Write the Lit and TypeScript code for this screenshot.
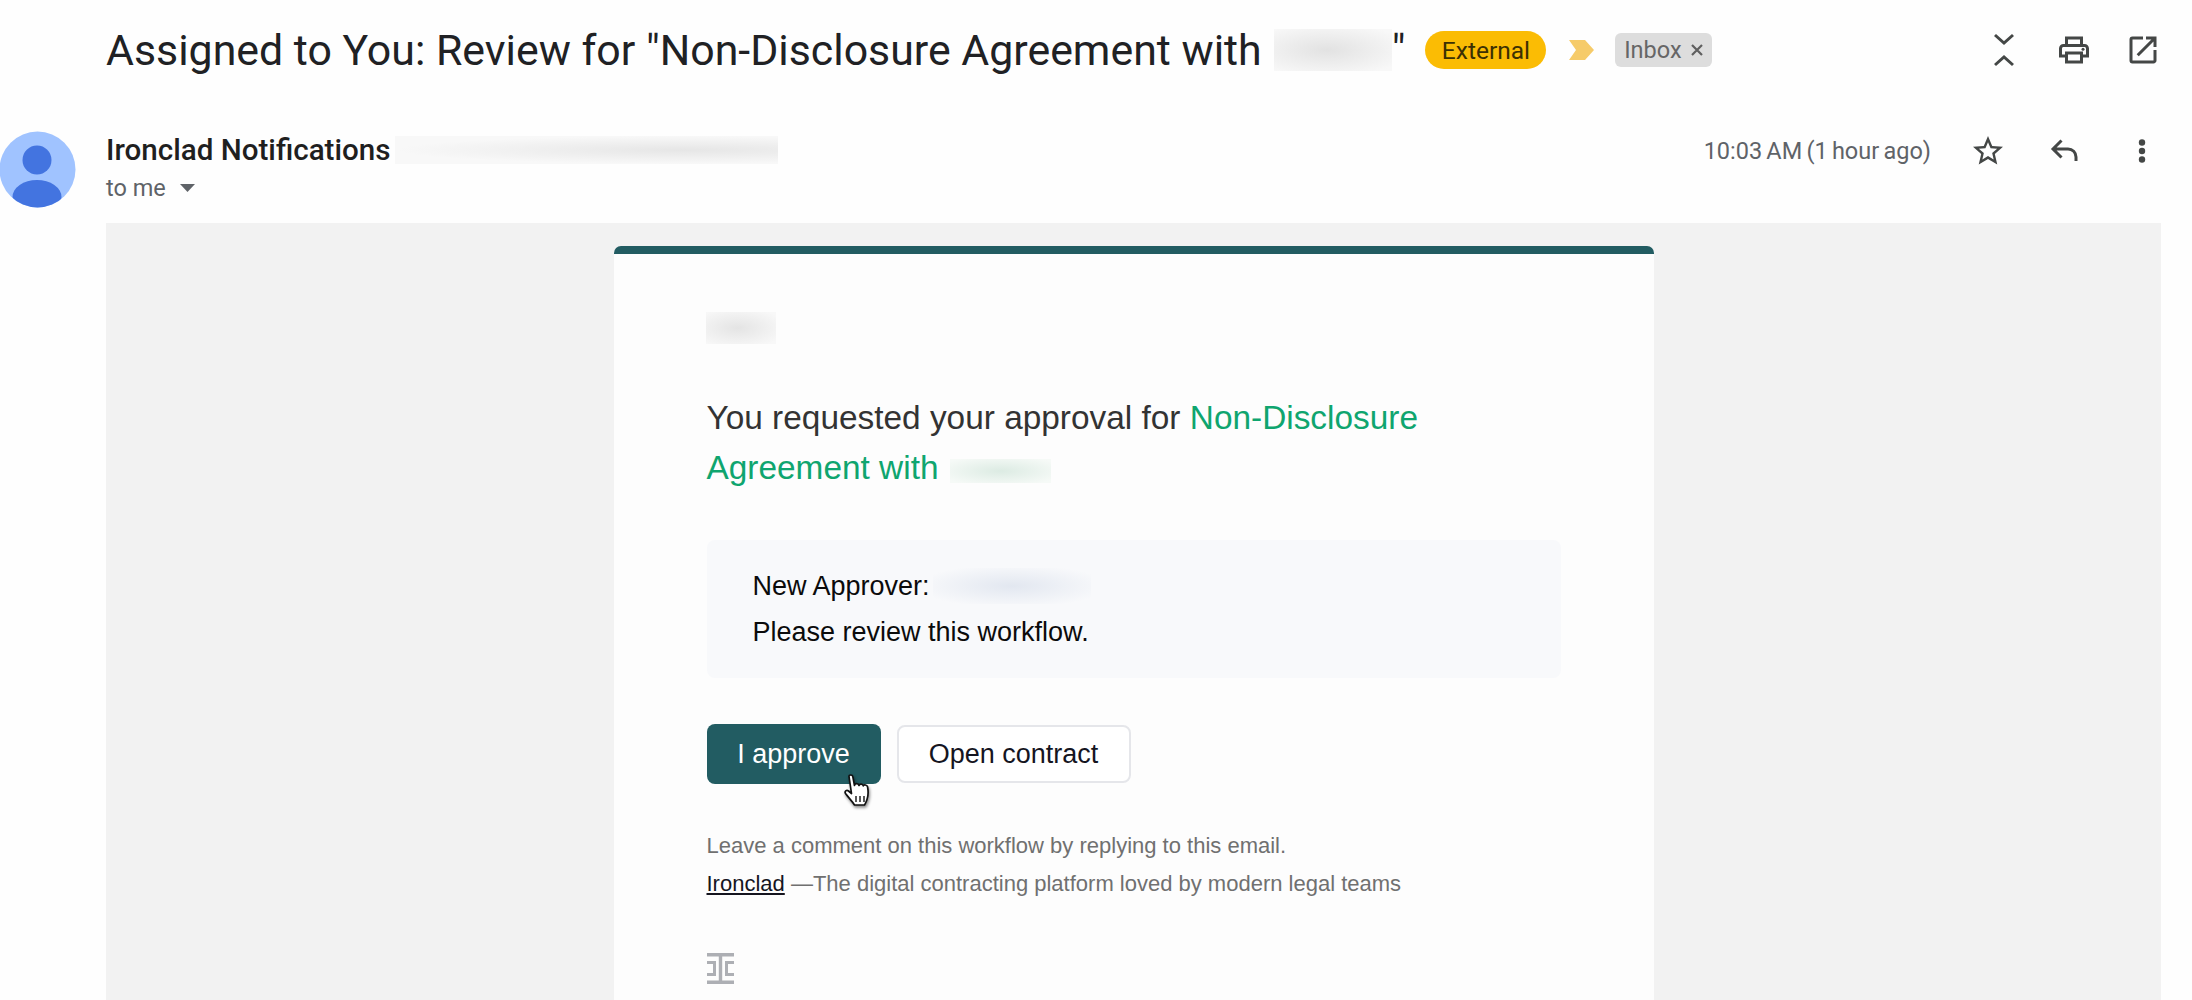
import { LitElement, html, css } from "lit";
import { customElement } from "lit/decorators.js";

@customElement("app-root")
export class AppRoot extends LitElement {
  static styles = css`
    :host { display: block; width: 2192px; height: 1000px; overflow: hidden; background: #fefefe; font-family: Roboto, "Noto Sans", sans-serif; color: #202124; }
    svg { display: block; flex: none; }
    .top { height: 100px; display: flex; align-items: center; padding: 0 31px 0 106px; }
    .title { font-size: 42.85px; line-height: 44px; font-weight: 400; color: #202124; white-space: nowrap; display: flex; align-items: center; }
    .b-title { display: inline-block; width: 118px; height: 42px; margin-left: 12px; background: radial-gradient(ellipse at 45% 50%, #e2e2e2, #f8f8f8 90%); }
    .pill { margin-left: 20px; width: 121px; height: 38px; border-radius: 19px; background: #fbbc04; color: #3c3003; font-size: 24.5px; display: flex; align-items: center; justify-content: center; }
    .marker { margin-left: 23px; }
    .chip { margin-left: 21px; width: 97px; height: 34px; border-radius: 6px; background: #dddddd; color: #666; font-size: 23.5px; display: flex; align-items: center; justify-content: center; gap: 8px; }
    .tools { margin-left: auto; display: flex; gap: 33.5px; }
    .sender { height: 123px; padding: 31px 32px 0 0; box-sizing: border-box; display: flex; align-items: flex-start; }
    .avatar { width: 76px; margin-right: 30px; }
    .who { display: flex; flex-direction: column; }
    .nameline { display: flex; align-items: center; height: 38px; }
    .name { font-size: 29.6px; font-weight: 500; color: #1f1f1f; }
    .b-mail { width: 383px; height: 28px; margin-left: 5px; background: radial-gradient(ellipse at 75% 50%, #e6e6e6, #f8f8f8 70%); }
    .tome { display: flex; align-items: center; gap: 14px; height: 38px; font-size: 23.5px; color: #5f6368; }
    .meta { margin-left: auto; display: flex; align-items: center; height: 40px; }
    .time { font-size: 23.5px; color: #5f6368; margin-right: 39px; word-spacing: -1.6px; }
    .acts { display: flex; gap: 41px; }
    .band { margin-left: 106px; width: 2055px; height: 777px; padding-top: 23px; box-sizing: border-box; background: #f2f2f2; display: flex; justify-content: center; }
    .card { width: 1040px; height: 760px; box-sizing: border-box; background: #fdfdfd; border-top: 8px solid #225c62; border-radius: 7px 7px 0 0; padding: 58px 93px 0 92px; font-family: "Liberation Sans", Arial, sans-serif; }
    .b-hi { width: 70px; height: 32px; background: radial-gradient(ellipse at 45% 50%, #e4e4e4, #f8f8f8 90%); }
    .h { margin: 49px 0 0 1px; font-size: 33.4px; line-height: 50px; font-weight: 400; color: #333333; }
    .h em { font-style: normal; color: #0fa56f; }
    .b-co { display: inline-block; width: 101px; height: 24px; margin-left: 11px; vertical-align: -4px; background: radial-gradient(ellipse at 50% 50%, #dcebe3, #f6faf7 90%); }
    .box { margin: 47px 0 0 1px; height: 138px; box-sizing: border-box; background: #f8f9fb; border-radius: 8px; padding: 23px 46px; font-size: 27px; line-height: 46px; color: #0b0b0b; }
    .row { display: flex; align-items: center; }
    .b-appr { width: 158px; height: 36px; margin-left: 3px; background: radial-gradient(ellipse at 50% 50%, #e2e7f0, #f8f9fb 85%); }
    .btns { position: relative; margin: 46px 0 0 1px; display: flex; align-items: center; gap: 16px; }
    .btn { box-sizing: border-box; display: flex; align-items: center; justify-content: center; font-size: 27px; border-radius: 8px; }
    .primary { width: 174px; height: 60px; background: #225c62; color: #fff; }
    .ghost { width: 234px; height: 58px; background: #fff; border: 2px solid #e5e6ea; color: #15151f; }
    .cursor { position: absolute; left: 137px; top: 50px; filter: drop-shadow(1px 2px 1.5px rgba(0,0,0,.45)); }
    .foot { margin: 43px 0 0 1px; font-size: 22px; line-height: 38px; color: #707070; }
    .foot a { color: #15151f; text-decoration: underline; }
    .logo { margin: 50px 0 0 1px; }
  `;

  render() {
    return html`
      <div class="top">
        <div class="title">Assigned to You: Review for "Non-Disclosure Agreement with<span class="b-title"></span>"</div>
        <div class="pill">External</div>
        <svg class="marker" width="25" height="20" viewBox="0 0 25 20"><path d="M0 0h16l9 10-9 10H0l7-10z" fill="#f6cb69"/></svg>
        <div class="chip">Inbox
          <svg width="14" height="14" viewBox="0 0 14 14"><path d="M2 2l10 10M12 2L2 12" stroke="#5f5f5f" stroke-width="2.2" fill="none"/></svg>
        </div>
        <div class="tools">
          <svg width="36" height="36" viewBox="0 0 36 36" fill="none" stroke="#444746" stroke-width="3"><path d="M9 3l9 8 9-8M9 33l9-8 9 8"/></svg>
          <svg width="36" height="36" viewBox="0 0 24 24" fill="#444746"><path d="M19 8h-1V3H6v5H5c-1.66 0-3 1.34-3 3v6h4v4h12v-4h4v-6c0-1.66-1.34-3-3-3zM8 5h8v3H8V5zm8 12v2H8v-4h8v2zm2-2v-2H6v2H4v-4c0-.55.45-1 1-1h14c.55 0 1 .45 1 1v4h-2z"/><circle cx="18" cy="11.5" r="1"/></svg>
          <svg width="36" height="36" viewBox="0 0 24 24" fill="#444746"><path d="M19 19H5V5h7V3H5a2 2 0 0 0-2 2v14a2 2 0 0 0 2 2h14c1.1 0 2-.9 2-2v-7h-2v7zM14 3v2h3.59l-9.83 9.83 1.41 1.41L19 6.41V10h2V3h-7z"/></svg>
        </div>
      </div>
      <div class="sender">
        <svg class="avatar" width="76" height="77" viewBox="0 0 76 77">
          <defs><clipPath id="av"><circle cx="37.5" cy="38.5" r="38"/></clipPath></defs>
          <circle cx="37.5" cy="38.5" r="38" fill="#a0c3ff"/>
          <g clip-path="url(#av)" fill="#4374e0"><circle cx="37" cy="29" r="14.5"/><ellipse cx="37" cy="66" rx="24.5" ry="17"/></g>
        </svg>
        <div class="who">
          <div class="nameline"><span class="name">Ironclad Notifications</span><div class="b-mail"></div></div>
          <div class="tome">to me <svg width="15" height="8" viewBox="0 0 15 8"><path d="M0 0h15L7.5 8z" fill="#5f6368"/></svg></div>
        </div>
        <div class="meta">
          <span class="time">10:03 AM (1 hour ago)</span>
          <div class="acts">
            <svg width="36" height="36" viewBox="0 0 24 24" fill="#444746"><path d="M22 9.24l-7.19-.62L12 2 9.19 8.63 2 9.24l5.46 4.73L5.82 21 12 17.27 18.18 21l-1.63-7.03L22 9.24zM12 15.4l-3.76 2.27 1-4.28-3.32-2.88 4.38-.38L12 6.1l1.71 4.04 4.38.38-3.32 2.88 1 4.28L12 15.4z"/></svg>
            <svg width="36" height="36" viewBox="0 0 36 36" fill="none" stroke="#444746" stroke-width="3"><path d="M14.5 7.5L6 16l8.500 8.500M6 16h15c4.500 0 8 3.500 8 8v4"/></svg>
            <svg width="36" height="36" viewBox="0 0 36 36" fill="#444746"><circle cx="18" cy="9.500" r="3.200"/><circle cx="18" cy="18" r="3.200"/><circle cx="18" cy="26.500" r="3.200"/></svg>
          </div>
        </div>
      </div>
      <div class="band">
        <div class="card">
          <div class="b-hi"></div>
          <p class="h">You requested your approval for <em>Non-Disclosure</em><br /><em>Agreement with</em><span class="b-co"></span></p>
          <div class="box">
            <div class="row">New Approver:<div class="b-appr"></div></div>
            <div>Please review this workflow.</div>
          </div>
          <div class="btns">
            <div class="btn primary">I approve</div>
            <div class="btn ghost">Open contract</div>
            <svg class="cursor" width="30" height="33" viewBox="0 0 30 33">
              <path d="M5 2.500c0-2 3.500-2 3.800 0l1.700 9c.2-2.500 4-2.500 4.500 0 .3-2 4-2 4.300.3.500-1.500 4-1 4.300 1.200.8 4.500.6 9-.6 12.500-.5 2-1.500 3.500-2.500 5.500H10.500C8 27 4 23 1.500 19.500c-1.300-2 1-4 3-2.500l3 2.500z" fill="#fff" stroke="#111" stroke-width="1.700" stroke-linejoin="round"/>
              <path d="M12 22v6M16 22v6M20 22v6" stroke="#222" stroke-width="1.500"/>
            </svg>
          </div>
          <div class="foot">
            <div>Leave a comment on this workflow by replying to this email.</div>
            <div><a>Ironclad</a> —The digital contracting platform loved by modern legal teams</div>
          </div>
          <svg class="logo" width="27" height="31" viewBox="0 0 27 31" fill="#adafb4">
            <path d="M0 0h27v3.500H0zM0 27.500h27V31H0zM11.800 3h3.400v25h-3.400zM0 8h9v15H0v-3h6v-9H0zM27 8h-9v15h9v-3h-6v-9h6z"/>
          </svg>
        </div>
      </div>
    `;
  }
}
